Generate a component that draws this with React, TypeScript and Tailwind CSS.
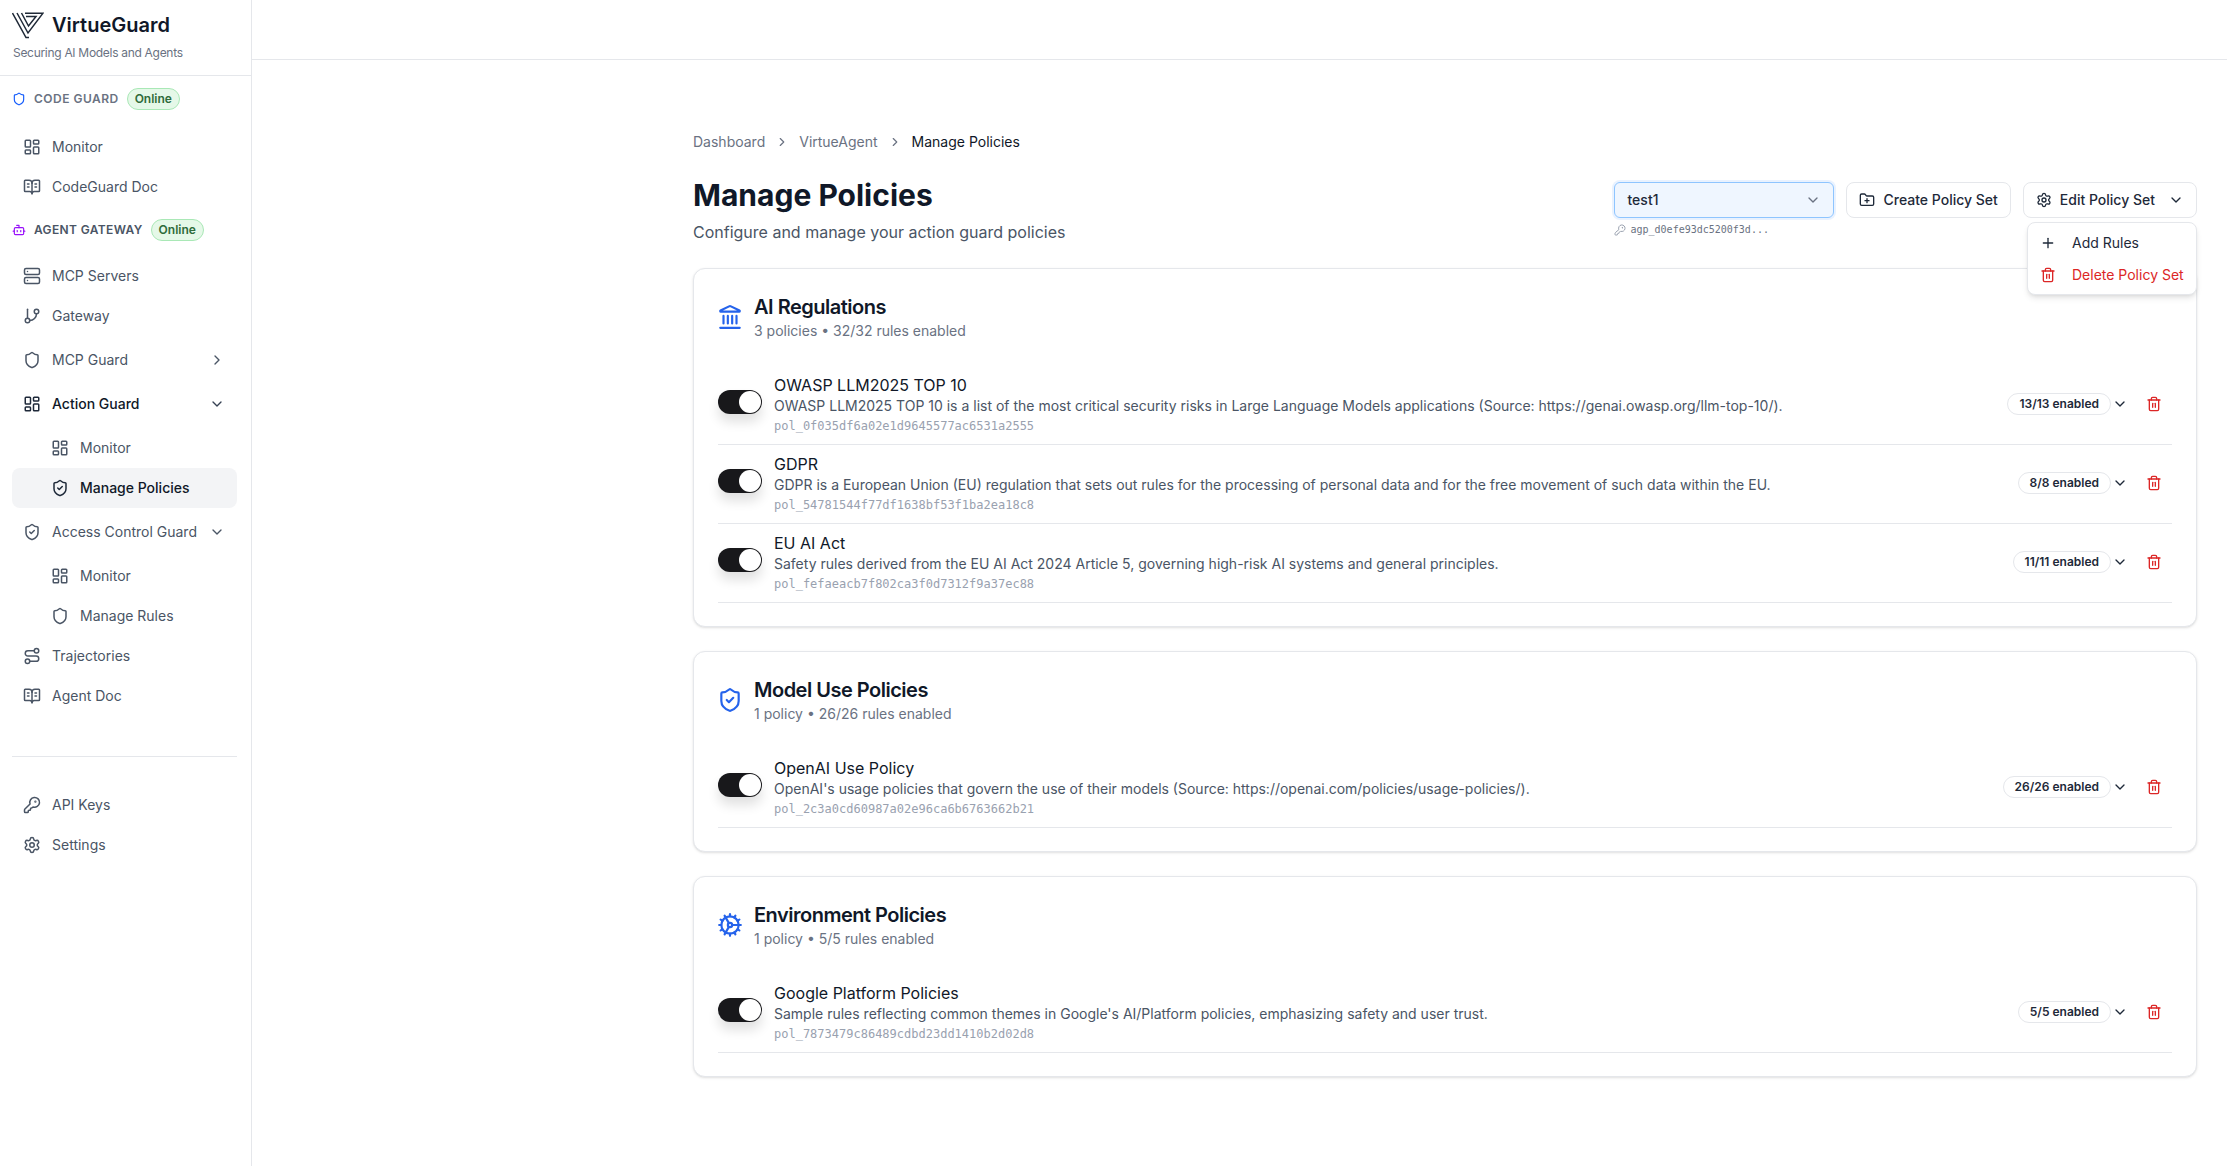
import {
  Bot,
  BookOpenText,
  ChevronDown,
  ChevronRight,
  Cog,
  FolderPlus,
  GitBranch,
  KeyRound,
  Landmark,
  LayoutDashboard,
  Plus,
  Route,
  Server,
  Settings,
  Shield,
  ShieldCheck,
  Trash2,
} from 'lucide-react'
import type { ReactNode } from 'react'

const sections = [
  {
    title: 'AI Regulations',
    summary: '3 policies • 32/32 rules enabled',
    icon: <Landmark className="w-[26px] h-[26px]" strokeWidth={2} />,
    policies: [
      {
        name: 'OWASP LLM2025 TOP 10',
        description:
          'OWASP LLM2025 TOP 10 is a list of the most critical security risks in Large Language Models applications (Source: https://genai.owasp.org/llm-top-10/).',
        id: 'pol_0f035df6a02e1d9645577ac6531a2555',
        count: '13/13 enabled',
      },
      {
        name: 'GDPR',
        description:
          'GDPR is a European Union (EU) regulation that sets out rules for the processing of personal data and for the free movement of such data within the EU.',
        id: 'pol_54781544f77df1638bf53f1ba2ea18c8',
        count: '8/8 enabled',
      },
      {
        name: 'EU AI Act',
        description:
          'Safety rules derived from the EU AI Act 2024 Article 5, governing high-risk AI systems and general principles.',
        id: 'pol_fefaeacb7f802ca3f0d7312f9a37ec88',
        count: '11/11 enabled',
      },
    ],
  },
  {
    title: 'Model Use Policies',
    summary: '1 policy • 26/26 rules enabled',
    icon: <ShieldCheck className="w-[26px] h-[26px]" strokeWidth={2} />,
    policies: [
      {
        name: 'OpenAI Use Policy',
        description:
          "OpenAI's usage policies that govern the use of their models (Source: https://openai.com/policies/usage-policies/).",
        id: 'pol_2c3a0cd60987a02e96ca6b6763662b21',
        count: '26/26 enabled',
      },
    ],
  },
  {
    title: 'Environment Policies',
    summary: '1 policy • 5/5 rules enabled',
    icon: <Cog className="w-[26px] h-[26px]" strokeWidth={2} />,
    policies: [
      {
        name: 'Google Platform Policies',
        description:
          "Sample rules reflecting common themes in Google's AI/Platform policies, emphasizing safety and user trust.",
        id: 'pol_7873479c86489cdbd23dd1410b2d02d8',
        count: '5/5 enabled',
      },
    ],
  },
]

function Logo() {
  return (
    <svg width="32" height="27" viewBox="0 0 32 27" fill="none" stroke="#1f2937" strokeWidth="1.5">
      <path d="M0.5 1 L14 25.5 L17 25.5" />
      <path d="M5 1 L16 21 L31 1.2 L13 1.2" />
      <path d="M9.5 1 L16.5 14 L24 4.5 L14 4.5" />
    </svg>
  )
}

function NavItem({
  icon,
  label,
  sub,
  active,
  strong,
  trailing,
}: {
  icon: ReactNode
  label: string
  sub?: boolean
  active?: boolean
  strong?: boolean
  trailing?: ReactNode
}) {
  return (
    <div
      className={`flex items-center h-10 rounded-lg pr-[12px] gap-[11px] ${sub ? 'pl-[39px]' : 'pl-[11px]'} ${
        active ? 'bg-gray-100 text-gray-900 font-medium' : strong ? 'text-gray-900 font-medium' : 'text-gray-600'
      }`}
    >
      <span className={`shrink-0 ${active || strong ? 'text-gray-800' : 'text-gray-600'}`}>{icon}</span>
      <span className="flex-1 text-sm whitespace-nowrap">{label}</span>
      {trailing}
    </div>
  )
}

function OnlineBadge() {
  return (
    <span className="inline-flex items-center h-[22px] px-[7px] rounded-full border border-[#a9e8b6] bg-[#e5f8e8] text-xs font-semibold text-[#2f6b3a]">
      Online
    </span>
  )
}

function Sidebar() {
  const ic = 'w-[18px] h-[18px]'
  return (
    <aside className="w-[252px] shrink-0 min-h-[1166px] border-r border-gray-200 bg-white">
      <div className="h-[76px] border-b border-gray-200 pl-3 pt-[10px]">
        <div className="flex items-center gap-[8px] h-[30px]">
          <Logo />
          <span className="text-xl font-semibold text-gray-900 leading-none">VirtueGuard</span>
        </div>
        <div className="mt-[4px] pl-px text-xs tracking-tight text-gray-500 leading-[18px]">
          Securing AI Models and Agents
        </div>
      </div>

      <div className="pl-3 pr-[14px]">
        <div className="flex items-center h-[45px] gap-[8px]">
          <Shield className="w-[14px] h-[14px] text-blue-600" strokeWidth={2} />
          <span className="text-xs font-semibold tracking-[0.04em] text-gray-500">CODE GUARD</span>
          <OnlineBadge />
        </div>
        <div className="mt-[6px]">
          <NavItem icon={<LayoutDashboard className={ic} />} label="Monitor" />
          <NavItem icon={<BookOpenText className={ic} />} label="CodeGuard Doc" />
        </div>
        <div className="flex items-center h-[45px] gap-[8px]">
          <Bot className="w-[14px] h-[14px] text-purple-600" strokeWidth={2} />
          <span className="text-xs font-semibold tracking-[0.03em] text-gray-600">AGENT GATEWAY</span>
          <OnlineBadge />
        </div>
        <div className="mt-[4px]">
          <NavItem icon={<Server className={ic} />} label="MCP Servers" />
          <NavItem icon={<GitBranch className={ic} />} label="Gateway" />
          <div className="mt-1">
            <NavItem
              icon={<Shield className={ic} />}
              label="MCP Guard"
              trailing={<ChevronRight className="w-4 h-4 text-gray-600" />}
            />
          </div>
          <div className="mt-1">
            <NavItem
              strong
              icon={<LayoutDashboard className={ic} />}
              label="Action Guard"
              trailing={<ChevronDown className="w-4 h-4 text-gray-700" />}
            />
          </div>
          <div className="mt-1">
            <NavItem sub icon={<LayoutDashboard className={ic} />} label="Monitor" />
            <NavItem sub active icon={<ShieldCheck className={ic} />} label="Manage Policies" />
          </div>
          <div className="mt-1">
            <NavItem
              icon={<ShieldCheck className={ic} />}
              label="Access Control Guard"
              trailing={<ChevronDown className="w-4 h-4 text-gray-600" />}
            />
          </div>
          <div className="mt-1">
            <NavItem sub icon={<LayoutDashboard className={ic} />} label="Monitor" />
            <NavItem sub icon={<Shield className={ic} />} label="Manage Rules" />
          </div>
          <NavItem icon={<Route className={ic} />} label="Trajectories" />
          <NavItem icon={<BookOpenText className={ic} />} label="Agent Doc" />
        </div>
        <div className="mt-[40px] mb-[28px] border-t border-gray-200" />
        <NavItem icon={<KeyRound className={ic} />} label="API Keys" />
        <NavItem icon={<Settings className={ic} />} label="Settings" />
      </div>
    </aside>
  )
}

function Toggle() {
  return (
    <div className="relative w-11 h-6 mb-[7px] rounded-full bg-[#18181b] shadow-[0_8px_12px_rgba(0,0,0,0.12)] shrink-0">
      <span className="absolute right-px top-px w-[22px] h-[22px] rounded-full bg-white" />
    </div>
  )
}

function PolicyRow({ name, description, id, count }: { name: string; description: string; id: string; count: string }) {
  return (
    <div className="flex items-center h-[79px] border-b border-gray-200">
      <Toggle />
      <div className="ml-3 flex-1 min-w-0 -mt-[1px]">
        <div className="text-base leading-[22px] text-gray-900">{name}</div>
        <div className="text-sm leading-[20px] text-gray-600 -mt-[0.5px]">{description}</div>
        <div className="font-['DejaVu_Sans_Mono',monospace] text-xs leading-[18px] text-gray-400 mt-px">{id}</div>
      </div>
      <div className="flex items-center pr-[10px] mb-[2px]">
        <span className="inline-flex items-center h-[22px] px-[11px] rounded-full border border-gray-200 text-xs font-semibold text-gray-800">
          {count}
        </span>
        <ChevronDown className="w-4 h-4 text-gray-800 ml-[1px]" />
        <Trash2 className="w-4 h-4 text-[#dc2626] ml-[18px]" />
      </div>
    </div>
  )
}

function SectionCard({ section }: { section: (typeof sections)[number] }) {
  return (
    <section className="rounded-xl border border-gray-200 bg-white shadow-sm px-6 pt-6 pb-[23px]">
      <div className="flex items-center h-[48px] gap-[11px] mb-[25px]">
        <span className="w-[26px] -ml-px flex justify-center text-[#2563eb]">{section.icon}</span>
        <div>
          <h2 className="text-xl font-semibold text-gray-900 leading-[28px] tracking-tight">{section.title}</h2>
          <p className="text-sm text-gray-500 leading-[20px]">{section.summary}</p>
        </div>
      </div>
      {section.policies.map((policy) => (
        <PolicyRow key={policy.id} {...policy} />
      ))}
    </section>
  )
}

function Header() {
  return (
    <div className="flex items-start justify-between">
      <div>
        <h1 className="text-3xl font-bold text-gray-900 leading-[38px]">Manage Policies</h1>
        <p className="mt-[6px] text-base text-gray-600 leading-6">Configure and manage your action guard policies</p>
      </div>
      <div className="flex items-start gap-3 mt-[6px] relative">
        <div>
          <div className="flex items-center justify-between w-[220px] h-9 px-3 rounded-md border border-blue-300 bg-blue-50 shadow-[0_0_0_2px_rgba(191,219,254,0.35)]">
            <span className="text-sm font-medium text-gray-800">test1</span>
            <ChevronDown className="w-4 h-4 text-gray-500" />
          </div>
          <div className="mt-[4px] flex items-center gap-1 text-gray-400">
            <KeyRound className="w-3 h-3" />
            <span className="font-['DejaVu_Sans_Mono',monospace] text-[10px] leading-4 text-gray-500">
              agp_d0efe93dc5200f3d...
            </span>
          </div>
        </div>
        <button className="flex items-center gap-[8px] h-9 px-3 rounded-lg border border-gray-200 bg-white text-sm font-medium text-gray-800">
          <FolderPlus className="w-4 h-4" />
          Create Policy Set
        </button>
        <button className="flex items-center gap-[8px] h-9 px-3 rounded-lg border border-gray-200 bg-white text-sm font-medium text-gray-800">
          <Settings className="w-4 h-4" />
          Edit Policy Set
          <ChevronDown className="w-4 h-4 ml-[5px]" />
        </button>
        <div className="absolute right-0 top-[40px] z-10 w-[170px] h-[73px] rounded-lg border border-gray-200 bg-white shadow-md py-[4px] px-[6px] text-sm">
          <div className="flex items-center gap-[16px] h-[32px] pl-[6px] text-gray-800">
            <Plus className="w-4 h-4" />
            Add Rules
          </div>
          <div className="flex items-center gap-[16px] h-[32px] pl-[6px] text-[#dc2626]">
            <Trash2 className="w-4 h-4" />
            Delete Policy Set
          </div>
        </div>
      </div>
    </div>
  )
}

export default function App() {
  return (
    <div className="flex min-h-[1166px] bg-white font-['Inter',sans-serif]">
      <Sidebar />
      <div className="flex-1 min-w-0">
        <div className="h-[60px] border-b border-gray-200" />
        <main className="pl-[441px] pr-[30px] pt-[72px]">
          <nav className="flex items-center gap-[10px] text-sm leading-5 text-gray-500 mb-[24px]">
            <span>Dashboard</span>
            <ChevronRight className="w-[14px] h-[14px]" />
            <span>VirtueAgent</span>
            <ChevronRight className="w-[14px] h-[14px]" />
            <span className="text-gray-900">Manage Policies</span>
          </nav>
          <Header />
          <div className="mt-[24px] flex flex-col gap-[24px]">
            {sections.map((section) => (
              <SectionCard key={section.title} section={section} />
            ))}
          </div>
        </main>
      </div>
    </div>
  )
}
